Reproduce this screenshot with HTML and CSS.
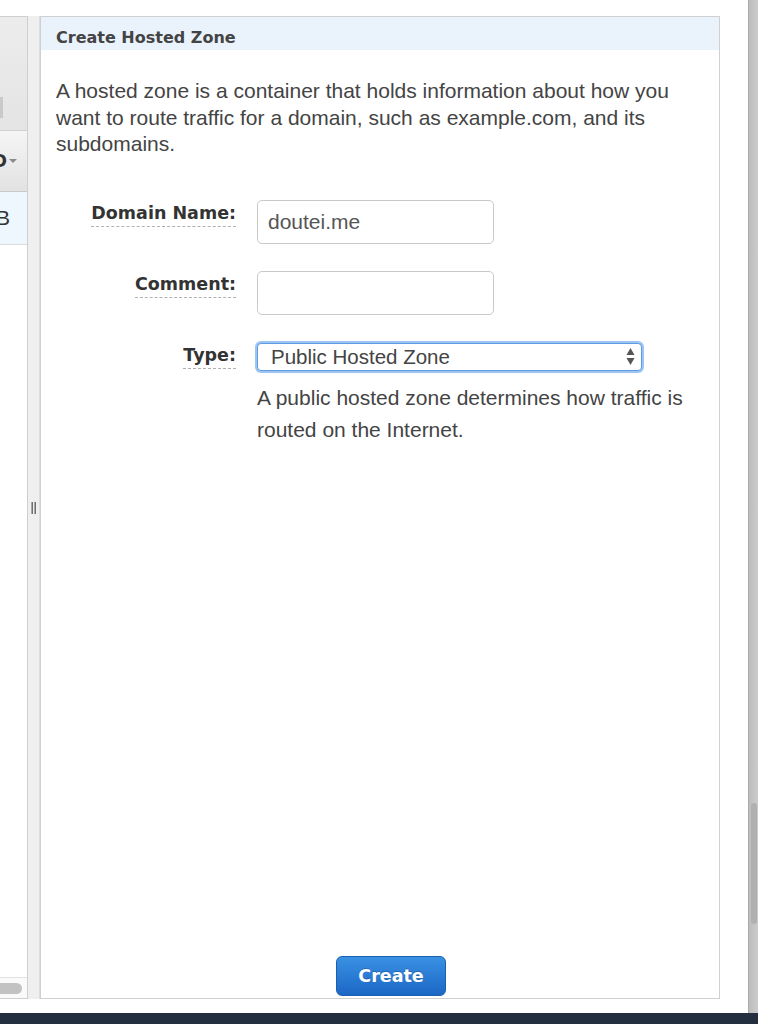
FILE: index.html
```html
<!DOCTYPE html>
<html lang="en">
<head>
<meta charset="utf-8">
<title>Create Hosted Zone</title>
<link rel="stylesheet" href="styles.css">
</head>
<body>
<div class="app">
  <div class="main-row">
    <div class="workspace">
      <div class="list-col">
        <div class="lc-toolbar"><span class="lc-btn"></span></div>
        <div class="lc-head"><span class="lc-title">Hosted Zone ID</span><span class="lc-caret"></span></div>
        <div class="lc-row"><span class="lc-cell">Z3KB</span></div>
        <div class="lc-fill"></div>
        <div class="lc-hscroll"><span class="lc-thumb"></span></div>
      </div>
      <div class="splitter">
        <svg class="grip" width="6" height="12" viewBox="0 0 6 12">
          <rect x="0" y="0" width="1" height="12" fill="#a8a8a8"/>
          <rect x="1" y="0" width="1" height="12" fill="#6f6f6f"/>
          <rect x="3" y="0" width="1" height="12" fill="#a8a8a8"/>
          <rect x="4" y="0" width="1" height="12" fill="#6f6f6f"/>
        </svg>
      </div>
      <section class="panel">
        <header class="panel-head">Create Hosted Zone</header>
        <p class="intro">A hosted zone is a container that holds information about how you want to route traffic for a domain, such as example.com, and its subdomains.</p>
        <div class="form">
          <div class="f-row">
            <label class="f-label" for="domain"><span>Domain Name:</span></label>
            <input class="text-input" id="domain" type="text" value="doutei.me">
          </div>
          <div class="f-row">
            <label class="f-label" for="comment"><span>Comment:</span></label>
            <input class="text-input" id="comment" type="text" value="">
          </div>
          <div class="f-row f-row-type">
            <label class="f-label f-label-type"><span>Type:</span></label>
            <div class="f-field">
              <div class="select-box">
                <span class="select-value">Public Hosted Zone</span>
                <svg class="select-arrows" width="9" height="17" viewBox="0 0 9 17">
                  <polygon points="0.5,7 4.5,0 8.5,7" fill="#555"/>
                  <polygon points="0.5,10 8.5,10 4.5,17" fill="#555"/>
                </svg>
              </div>
              <p class="desc">A public hosted zone determines how traffic is routed on the Internet.</p>
            </div>
          </div>
        </div>
        <div class="actions"><button class="btn-primary" type="button">Create</button></div>
      </section>
      <div class="gutter"></div>
    </div>
    <div class="vscroll"><span class="vthumb"></span></div>
  </div>
  <div class="footer-bar"></div>
</div>
</body>
</html>
```
FILE: styles.css
```css
* { box-sizing: border-box; }
html, body { margin: 0; padding: 0; }
body {
  width: 758px;
  height: 1024px;
  overflow: hidden;
  background: #fff;
  font-family: "Liberation Sans", Arial, sans-serif;
  color: #444;
}
.app { display: flex; flex-direction: column; height: 1024px; }
.main-row { flex: 1; display: flex; min-height: 0; }
.workspace { flex: 1; display: flex; padding: 16px 0 14px 0; }

/* left list column (cut off) */
.list-col {
  width: 28px;
  flex: none;
  display: flex;
  flex-direction: column;
  border-top: 1px solid #cfcfcf;
  border-right: 1px solid #cfcfcf;
  border-bottom: 1px solid #cfcfcf;
  overflow: hidden;
  background: #fff;
}
.lc-toolbar {
  height: 114px;
  flex: none;
  background: linear-gradient(#ececec, #e4e4e4);
  border-bottom: 1px solid #d2d2d2;
  padding-top: 80px;
}
.lc-btn { display: block; width: 3px; height: 21px; background: #c9c9c9; }
.lc-head {
  height: 61px;
  flex: none;
  display: flex;
  align-items: center;
  justify-content: flex-end;
  padding-right: 10px;
  background: linear-gradient(#f5f5f5, #e2e2e2);
  border-bottom: 1px solid #c9c9c9;
  white-space: nowrap;
}
.lc-title {
  flex: none;
  font-family: "DejaVu Sans", sans-serif;
  font-weight: bold;
  font-size: 17.5px;
  color: #333;
}
.lc-caret {
  flex: none;
  width: 0;
  height: 0;
  margin-left: 2px;
  border-left: 4px solid transparent;
  border-right: 4px solid transparent;
  border-top: 4px solid #8a8a8a;
}
.lc-row {
  height: 53px;
  flex: none;
  display: flex;
  align-items: center;
  justify-content: flex-end;
  padding-right: 17px;
  background: #eef6fe;
  border-bottom: 1px solid #dcdcdc;
  white-space: nowrap;
}
.lc-cell { flex: none; font-size: 21px; color: #333; }
.lc-fill { flex: 1; }
.lc-hscroll {
  height: 21px;
  flex: none;
  border-top: 1px solid #e2e2e2;
  background: #fafafa;
  padding-top: 5px;
}
.lc-thumb {
  display: block;
  width: 28px;
  height: 11px;
  margin-left: -6px;
  border-radius: 6px;
  background: #c2c2c2;
}

/* splitter */
.splitter {
  width: 12px;
  flex: none;
  display: flex;
  align-items: center;
  justify-content: center;
  padding-left: 1px;
  background: #efefef;
  border-right: 1px solid #dddddd;
}
.grip { display: block; }

/* main panel */
.panel {
  width: 680px;
  flex: none;
  display: flex;
  flex-direction: column;
  border: 1px solid #d0d0d0;
  background: #fff;
}
.panel-head {
  height: 33px;
  flex: none;
  padding: 11px 15px 2px;
  background: #eaf2fc;
  font-family: "DejaVu Sans", sans-serif;
  font-weight: bold;
  font-size: 16px;
  line-height: 20px;
  color: #444;
}
.intro {
  margin: 28px 22px 0 15px;
  font-size: 21px;
  line-height: 26.5px;
  color: #444;
}
.form { margin-top: 42px; padding-left: 15px; }
.f-row { display: flex; align-items: flex-start; }
.f-row + .f-row { margin-top: 27px; }
.f-row.f-row-type { margin-top: 28px; }
.f-label {
  width: 180px;
  flex: none;
  margin-right: 21px;
  padding-top: 3px;
  text-align: right;
}
.f-label.f-label-type { padding-top: 2px; }
.f-label span {
  display: inline-block;
  font-family: "DejaVu Sans", sans-serif;
  font-weight: bold;
  font-size: 17.5px;
  line-height: 21px;
  color: #333;
  padding-bottom: 2px;
  border-bottom: 1px dashed #b0b0b0;
}
.text-input {
  display: block;
  width: 237px;
  height: 44px;
  margin: 0;
  padding: 0 10px;
  border: 1px solid #c9c9c9;
  border-radius: 5px;
  background: #fff;
  font-family: "Liberation Sans", Arial, sans-serif;
  font-size: 21px;
  color: #555;
  outline: none;
}
.f-field { display: flex; flex-direction: column; }
.select-box {
  width: 385px;
  height: 28px;
  display: flex;
  align-items: center;
  justify-content: space-between;
  padding: 0 6px 0 13px;
  border: 1px solid #5e9be3;
  border-radius: 4px;
  box-shadow: 0 0 0 2px #9dc5f3;
  background: #fff;
  font-size: 20.5px;
  line-height: 26px;
  color: #444;
}
.select-arrows { display: block; flex: none; }
.desc {
  margin: 11px 0 0 0;
  font-size: 21px;
  line-height: 32px;
  color: #444;
}
.actions {
  margin-top: auto;
  display: flex;
  justify-content: center;
  padding: 0 0 2px 22px;
}
.btn-primary {
  width: 110px;
  height: 40px;
  padding: 0;
  border: 1px solid #1b5fb1;
  border-radius: 6px;
  background: linear-gradient(#3a91e3, #1b67c5);
  color: #fff;
  font-family: "DejaVu Sans", sans-serif;
  font-weight: bold;
  font-size: 17.5px;
  line-height: 38px;
  text-shadow: 0 -1px 0 rgba(0, 0, 0, 0.2);
}
.gutter { flex: 1; }

/* right scrollbar */
.vscroll {
  width: 10px;
  flex: none;
  display: flex;
  flex-direction: column;
  justify-content: flex-end;
  padding: 0 1px 89px 2px;
  border-left: 1px solid #a9a9a9;
  background: linear-gradient(to right, #bdbdbd, #cbcbcb);
}
.vthumb {
  display: block;
  height: 121px;
  border-radius: 3px;
  background: #b0b0b0;
}
.footer-bar { height: 11px; flex: none; background: #232f3e; }
```
